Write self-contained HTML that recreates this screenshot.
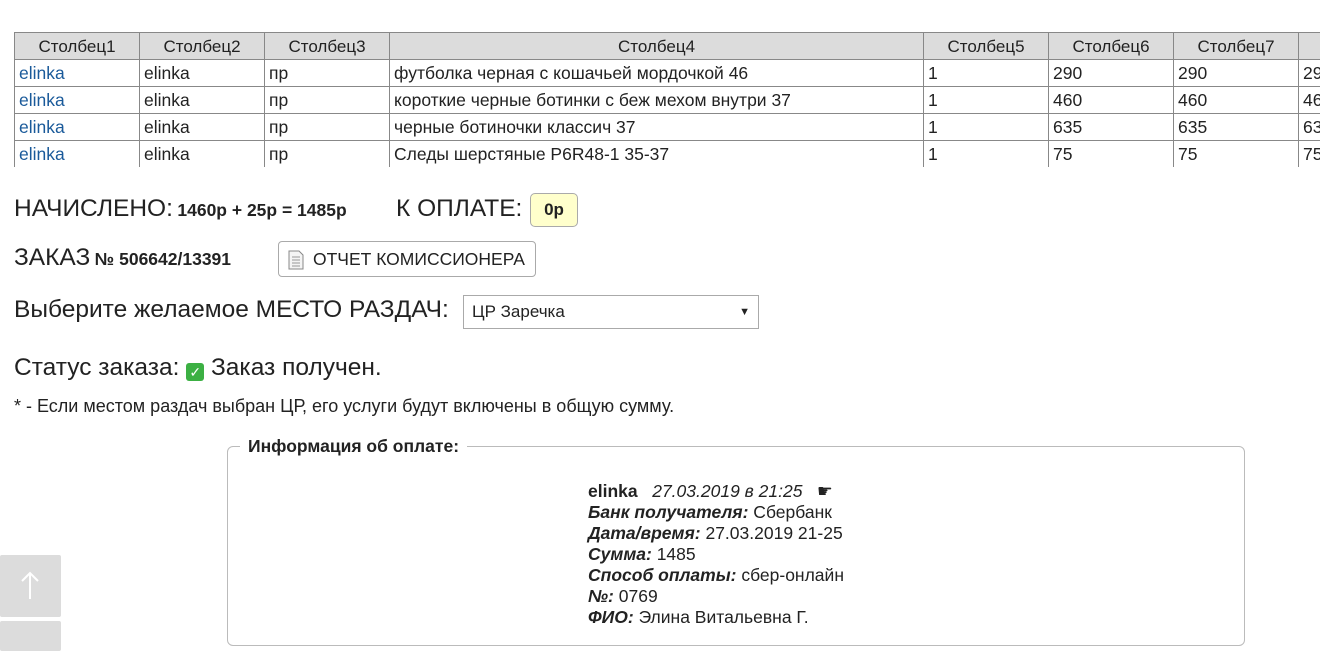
<!DOCTYPE html>
<html><head><meta charset="utf-8"><style>
body{margin:0;width:1320px;height:639px;overflow:hidden;background:#fff;font-family:"Liberation Sans",sans-serif;color:#222;position:relative}
.tw{position:absolute;left:14px;top:32px;width:1306px;height:135px;overflow:hidden}
table{border-collapse:collapse;table-layout:fixed;width:1409px;font-size:17.5px}
td,th{border:1px solid #888;height:26px;padding:0 0 0 4px;white-space:nowrap;overflow:hidden;text-align:left;font-weight:normal;line-height:25px}
th{background:#dcdcdc;text-align:center;padding:0;font-size:17px}
a{color:#1a5a9a;text-decoration:none}
.abs{position:absolute;white-space:nowrap}
.big{font-size:24.5px}
.b{font-weight:bold;font-size:17.5px}
</style></head><body>
<div class="tw"><table>
<colgroup><col style="width:125px"><col style="width:125px"><col style="width:125px"><col style="width:534px"><col style="width:125px"><col style="width:125px"><col style="width:125px"><col style="width:125px"></colgroup>
<tr><th>Столбец1</th><th>Столбец2</th><th>Столбец3</th><th>Столбец4</th><th>Столбец5</th><th>Столбец6</th><th>Столбец7</th><th>Столбец8</th></tr>
<tr><td><a>elinka</a></td><td>elinka</td><td>пр</td><td>футболка черная с кошачьей мордочкой 46</td><td>1</td><td>290</td><td>290</td><td>290</td></tr>
<tr><td><a>elinka</a></td><td>elinka</td><td>пр</td><td>короткие черные ботинки с беж мехом внутри 37</td><td>1</td><td>460</td><td>460</td><td>460</td></tr>
<tr><td><a>elinka</a></td><td>elinka</td><td>пр</td><td>черные ботиночки классич 37</td><td>1</td><td>635</td><td>635</td><td>635</td></tr>
<tr><td><a>elinka</a></td><td>elinka</td><td>пр</td><td>Следы шерстяные P6R48-1 35-37</td><td>1</td><td>75</td><td>75</td><td>75</td></tr>
</table></div>

<div class="abs" style="left:14px;top:195px"><span class="big">НАЧИСЛЕНО:</span> <span class="b">1460р + 25р = 1485р</span></div>
<div class="abs big" style="left:396px;top:195px">К ОПЛАТЕ:</div>
<div class="abs" style="left:530px;top:193px;width:48px;height:34px;border:1px solid #aaa;border-radius:5px;background:#ffffcc;box-sizing:border-box;text-align:center;line-height:32px;font-weight:bold;font-size:17px">0р</div>

<div class="abs" style="left:14px;top:244px"><span class="big">ЗАКАЗ</span> <span class="b">№ 506642/13391</span></div>
<div class="abs" style="left:278px;top:241px;width:258px;height:36px;border:1px solid #aaa;border-radius:4px;box-sizing:border-box;font-size:17.5px;line-height:34px;padding-left:34px">ОТЧЕТ КОМИССИОНЕРА
<svg style="position:absolute;left:9px;top:8px" width="16" height="20" viewBox="0 0 16 20"><path d="M1 1h10l4 4v14H1z" fill="#f4f4f4" stroke="#888"/><path d="M4 7h8M4 10h8M4 13h8M4 16h8" stroke="#999"/></svg></div>

<div class="abs big" style="left:14px;top:296px">Выберите желаемое МЕСТО РАЗДАЧ:</div>
<div class="abs" style="left:463px;top:295px;width:296px;height:34px;border:1px solid #aaa;box-sizing:border-box;font-size:17px;line-height:32px;padding-left:8px">ЦР Заречка<span style="position:absolute;right:8px;font-size:11px">▼</span></div>

<div class="abs big" style="left:14px;top:354px">Статус заказа: <span style="display:inline-block;width:18px;height:18px;background:#3cb043;border-radius:3px;vertical-align:-2px;color:#fff;font-size:14px;line-height:18px;text-align:center">✓</span> Заказ получен.</div>

<div class="abs" style="left:14px;top:396px;font-size:18px">* - Если местом раздач выбран ЦР, его услуги будут включены в общую сумму.</div>

<div class="abs" style="left:227px;top:446px;width:1018px;height:200px;border:1px solid #bbb;border-radius:6px;box-sizing:border-box"></div>
<div class="abs" style="left:240px;top:436px;background:#fff;padding:0 8px;font-weight:bold;font-size:17.5px">Информация об оплате:</div>

<div class="abs" style="left:588px;top:481px;font-size:17.5px;line-height:21px">
<b>elinka</b> &nbsp; <i>27.03.2019 в 21:25</i> &nbsp; ☛<br>
<b><i>Банк получателя:</i></b> Сбербанк<br>
<b><i>Дата/время:</i></b> 27.03.2019 21-25<br>
<b><i>Сумма:</i></b> 1485<br>
<b><i>Способ оплаты:</i></b> сбер-онлайн<br>
<b><i>№:</i></b> 0769<br>
<b><i>ФИО:</i></b> Элина Витальевна Г.</div>

<div class="abs" style="left:0;top:555px;width:61px;height:62px;background:#dcdcdc;border-radius:2px"><svg width="61" height="62"><path d="M30 44V18M22 26l8-8 8 8" stroke="#fff" stroke-width="2" fill="none"/></svg></div>
<div class="abs" style="left:0;top:621px;width:61px;height:30px;background:#dcdcdc;border-radius:2px"></div>
</body></html>
